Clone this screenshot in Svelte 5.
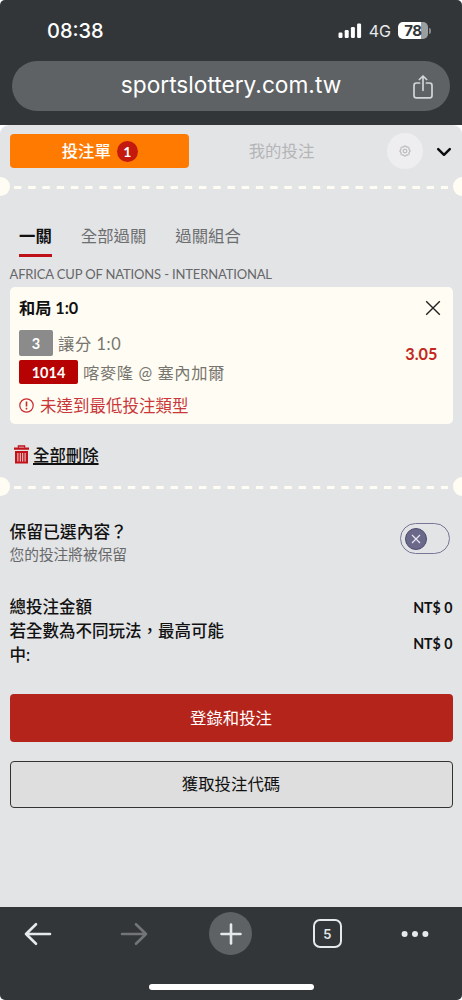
<script>
  let keepSelection = $state(false);
  let activeMode = $state('一關');

  const modes = ['一關', '全部過關', '過關組合'];

  const bet = {
    league: 'AFRICA CUP OF NATIONS - INTERNATIONAL',
    pick: '和局 1:0',
    marketNo: '3',
    market: '讓分 1:0',
    eventNo: '1014',
    event: '喀麥隆 @ 塞內加爾',
    odds: '3.05',
    warning: '未達到最低投注類型'
  };

  const totals = [
    { label: '總投注金額', value: 'NT$ 0' },
    { label: '若全數為不同玩法，最高可能中:', value: 'NT$ 0' }
  ];
</script>

{#snippet perforation()}
  <div class="perforation">
    <span class="notch"></span>
    <svg class="dashes" width="434" height="4" viewBox="0 0 434 4">
      <path d="M0 2.5H434" stroke="#fffdf3" stroke-width="3" stroke-dasharray="7.4 6.83" />
    </svg>
    <span class="notch"></span>
  </div>
{/snippet}

<div class="phone">
  <header class="browser-top">
    <div class="status-bar">
      <span class="clock">08:38</span>
      <div class="status-right">
        <svg width="24" height="16" viewBox="0 0 24 16" fill="#fff">
          <rect x="0.5" y="9.5" width="4" height="5.5" rx="1.2" />
          <rect x="6.7" y="7" width="4" height="8" rx="1.2" />
          <rect x="12.9" y="4" width="4" height="11" rx="1.2" />
          <rect x="19.1" y="0.5" width="4" height="14.5" rx="1.2" />
        </svg>
        <span class="network">4G</span>
        <div class="battery"><span>78</span></div>
        <i class="battery-cap"></i>
      </div>
    </div>
    <div class="url-bar">
      <span class="url">sportslottery.com.tw</span>
      <svg class="share" width="20" height="24" viewBox="0 0 20 24" fill="none" stroke="#d3d6d8" stroke-width="1.7" stroke-linecap="round" stroke-linejoin="round">
        <path d="M6.6 8H3.4Q1 8 1 10.4V20.4Q1 22.8 3.4 22.8H16.6Q19 22.8 19 20.4V10.4Q19 8 16.6 8H13.4M10 15.3V1.2M6.4 4.5L10 1L13.6 4.5" />
      </svg>
    </div>
  </header>

  <main class="slip">
    <div class="slip-tabs">
      <button class="tab-slip"><span class="tab-text">投注單</span><span class="count">1</span></button>
      <button class="tab-mine">我的投注</button>
      <button class="settings" aria-label="設定">
        <svg width="12" height="12" viewBox="0 0 12 12" fill="none" stroke="#a2a2a4" stroke-width="0.8" stroke-linejoin="round">
          <path d="M4.9 1.9L5.1 1H6.9L7.1 1.9L8.2 2.3L9.1 1.7L10.3 2.9L9.7 3.8L10.1 4.9L11 5.1V6.9L10.1 7.1L9.7 8.2L10.3 9.1L9.1 10.3L8.2 9.7L7.1 10.1L6.9 11H5.1L4.9 10.1L3.8 9.7L2.9 10.3L1.7 9.1L2.3 8.2L1.9 7.1L1 6.9V5.1L1.9 4.9L2.3 3.8L1.7 2.9L2.9 1.7L3.8 2.3Z" />
          <circle cx="6" cy="6" r="1.9" />
        </svg>
      </button>
      <svg class="chevron" width="16" height="10" viewBox="0 0 16 10" fill="none" stroke="#0c0c10" stroke-width="2.5" stroke-linecap="round" stroke-linejoin="round">
        <path d="M2.2 2.2L8 7.8L13.8 2.2" />
      </svg>
    </div>

    {@render perforation()}

    <nav class="modes">
      {#each modes as mode}
        <button class:active={mode === activeMode} onclick={() => (activeMode = mode)}>{mode}</button>
      {/each}
    </nav>

    <div class="league">{bet.league}</div>

    <section class="card">
      <div class="card-head">
        <strong>{bet.pick}</strong>
        <svg width="16" height="16" viewBox="0 0 16 16" stroke="#222" stroke-width="1.4">
          <path d="M1.2 1.2L14.8 14.8M14.8 1.2L1.2 14.8" />
        </svg>
      </div>
      <div class="card-body">
        <div>
          <div class="line market"><b class="tag grey">{bet.marketNo}</b>{bet.market}</div>
          <div class="line event"><b class="tag red">{bet.eventNo}</b>{bet.event}</div>
        </div>
        <b class="odds">{bet.odds}</b>
      </div>
      <div class="warning">
        <svg width="15" height="15" viewBox="0 0 15 15" fill="none" stroke="#c9282d">
          <circle cx="7.5" cy="7.5" r="6.7" stroke-width="1.2" />
          <path d="M7.5 3.4V8.4M7.5 9.8V11.4" stroke-width="1.6" />
        </svg>
        {bet.warning}
      </div>
    </section>

    <button class="clear-all">
      <svg width="15" height="19" viewBox="0 0 15 19">
        <path d="M4.4 2.8V1H10.6V2.8" fill="none" stroke="#c1121a" stroke-width="1.3" />
        <path d="M0 2.6H15V4.8H0ZM1 6H14V18.6H1Z" fill="#c1121a" />
        <path d="M3.9 8V16.6M6.3 8V16.6M8.7 8V16.6M11.1 8V16.6" stroke="#f0d5d6" stroke-width="1" />
      </svg>
      <span>全部刪除</span>
    </button>

    {@render perforation()}

    <section class="keep">
      <div>
        <div class="keep-title">保留已選內容？</div>
        <div class="keep-note">您的投注將被保留</div>
      </div>
      <button class="toggle" class:on={keepSelection} aria-label="保留已選內容" onclick={() => (keepSelection = !keepSelection)}>
        <span class="knob">
          <svg width="10" height="10" viewBox="0 0 10 10" stroke="#eceaf4" stroke-width="1.1">
            <path d="M1 1L9 9M9 1L1 9" />
          </svg>
        </span>
      </button>
    </section>

    <section class="totals">
      {#each totals as row}
        <div class="total">
          <span class="total-label">{row.label}</span>
          <span class="total-value">{row.value}</span>
        </div>
      {/each}
    </section>

    <div class="actions">
      <button class="primary">登錄和投注</button>
      <button class="secondary">獲取投注代碼</button>
    </div>
  </main>

  <footer class="toolbar">
    <div class="tools">
      <svg width="28" height="24" viewBox="0 0 28 24" fill="none" stroke="#e6e9ec" stroke-width="2.6" stroke-linecap="round" stroke-linejoin="round">
        <path d="M26 12H2M12 2.2L2 12L12 21.8" />
      </svg>
      <svg width="28" height="24" viewBox="0 0 28 24" fill="none" stroke="#727475" stroke-width="2.6" stroke-linecap="round" stroke-linejoin="round">
        <path d="M2 12H26M16 2.2L26 12L16 21.8" />
      </svg>
      <span class="plus">
        <svg width="24" height="24" viewBox="0 0 24 24" stroke="#e6e9ec" stroke-width="2.6" stroke-linecap="round">
          <path d="M12 2.5V21.5M2.5 12H21.5" />
        </svg>
      </span>
      <span class="tab-count">5</span>
      <svg width="28" height="8" viewBox="0 0 28 8" fill="#e6e9ec">
        <circle cx="3.6" cy="4" r="3" />
        <circle cx="14" cy="4" r="3" />
        <circle cx="24.4" cy="4" r="3" />
      </svg>
    </div>
    <div class="home-indicator"></div>
  </footer>
</div>

<style>
  :global(body) {
    margin: 0;
    background: #fff;
  }
  .phone {
    width: 462px;
    height: 1000px;
    display: flex;
    flex-direction: column;
    overflow: hidden;
    border-radius: 5px;
    background: #fff;
    font-family: Lato, 'Noto Sans CJK TC', sans-serif;
    color: #111;
  }
  button {
    font: inherit;
    color: inherit;
    border: none;
    background: none;
    padding: 0;
    cursor: pointer;
  }
  svg {
    display: block;
    flex-shrink: 0;
  }

  .browser-top {
    height: 125px;
    box-sizing: border-box;
    padding: 0 12px;
    background: #323639;
    font-family: Inter, 'Liberation Sans', sans-serif;
    color: #fff;
  }
  .status-bar {
    display: flex;
    align-items: center;
    justify-content: space-between;
    height: 61px;
    padding: 0 19px 0 35px;
  }
  .clock {
    font-size: 20px;
    font-weight: 500;
  }
  .status-right {
    display: flex;
    align-items: center;
  }
  .network {
    margin: 0 7px 0 7px;
    font-size: 16px;
    color: #e9eaeb;
  }
  .battery {
    width: 30px;
    height: 17px;
    line-height: 17px;
    border-radius: 5px;
    background: linear-gradient(90deg, #fff 78%, #9b9d9f 78%);
    color: #323639;
    font-size: 15px;
    font-weight: 700;
    text-align: center;
  }
  .battery span {
    letter-spacing: -0.4px;
  }
  .battery-cap {
    width: 2px;
    height: 6px;
    margin-left: 1px;
    border-radius: 0 3px 3px 0;
    background: #85888a;
  }
  .url-bar {
    display: flex;
    align-items: center;
    height: 50px;
    padding: 0 17px 0 37px;
    border-radius: 25px;
    background: #5e6265;
  }
  .url {
    flex: 1;
    margin-top: -3px;
    text-align: center;
    font-size: 22.7px;
  }
  .share {
    margin-top: 2px;
  }

  .slip {
    flex: 1;
    border-radius: 9px 9px 0 0;
    background: #e3e4e6;
    overflow: hidden;
  }
  .slip-tabs {
    display: flex;
    align-items: center;
    height: 52px;
    padding: 0 10px 0 9.5px;
  }
  .tab-slip {
    display: flex;
    align-items: center;
    justify-content: center;
    gap: 6px;
    width: 179.5px;
    height: 34px;
    padding-left: 1px;
    box-sizing: border-box;
    border-radius: 4px;
    background: #ff7a00;
    color: #fff;
    font-size: 16.4px;
    font-weight: 500;
  }
  .tab-text {
    margin-top: -3px;
  }
  .count {
    width: 21px;
    height: 21px;
    line-height: 21px;
    border-radius: 50%;
    background: #c3190f;
    font-size: 14px;
    font-weight: 700;
  }
  .tab-mine {
    flex: 1;
    padding: 0 13px 2px 0;
    color: #b4b5b7;
    font-size: 16.4px;
  }
  .settings {
    display: flex;
    align-items: center;
    justify-content: center;
    width: 36px;
    height: 36px;
    margin-right: 13px;
    border-radius: 50%;
    background: #eeeef1;
  }
  .chevron {
    margin-top: 1px;
  }

  .perforation {
    display: flex;
    align-items: center;
    justify-content: space-between;
    height: 19px;
    margin: 0 -9.5px;
  }
  .notch {
    width: 19px;
    height: 19px;
    border-radius: 50%;
    background: #fffdf3;
  }

  .modes {
    display: flex;
    gap: 29px;
    height: 60.5px;
    padding: 0 19px;
    align-items: flex-end;
    color: #6d6e70;
  }
  .modes button {
    height: 35px;
    line-height: 28px;
    padding-bottom: 3px;
    font-size: 16.4px;
    border-bottom: 3.5px solid transparent;
    box-sizing: border-box;
  }
  .modes .active {
    color: #111;
    font-weight: 700;
    border-color: #bf1118;
  }
  .league {
    height: 30.5px;
    line-height: 35px;
    padding-left: 9.5px;
    color: #666769;
    font-size: 13px;
    letter-spacing: -0.15px;
  }

  .card {
    height: 137px;
    box-sizing: border-box;
    margin: 0 9.5px;
    padding: 7px 10px 0 9.5px;
    border-radius: 5px;
    background: #fffdf3;
  }
  .card-head {
    display: flex;
    align-items: center;
    justify-content: space-between;
    height: 25px;
    padding-right: 2px;
    font-size: 16.2px;
  }
  .card-head svg {
    margin-top: 3px;
  }
  .card-body {
    display: flex;
    align-items: center;
    justify-content: space-between;
    padding: 11px 5px 0 0;
  }
  .line {
    display: flex;
    align-items: center;
    gap: 5px;
    color: #77756f;
    font-size: 16.3px;
    letter-spacing: 0.6px;
  }
  .market {
    height: 26px;
  }
  .event {
    height: 24px;
    margin-top: 4px;
  }
  .tag {
    border-radius: 2px;
    color: #fff;
    font-size: 14.5px;
    text-align: center;
    letter-spacing: 0;
  }
  .grey {
    width: 34px;
    height: 26px;
    line-height: 27px;
    background: #8b8b8b;
  }
  .red {
    width: 59px;
    height: 24px;
    line-height: 25px;
    background: #b60202;
  }
  .odds {
    margin-top: -8px;
    color: #c3281f;
    font-size: 16.3px;
  }
  .warning {
    display: flex;
    align-items: center;
    gap: 6px;
    height: 24px;
    margin-top: 9px;
    color: #c9373a;
    font-size: 16.5px;
  }

  .clear-all {
    display: flex;
    align-items: center;
    gap: 4px;
    height: 53px;
    padding: 8px 0 0 14px;
    box-sizing: border-box;
    font-size: 16.4px;
    font-weight: 500;
  }
  .clear-all span {
    margin-top: -2px;
    text-decoration: underline;
    text-decoration-thickness: 1.5px;
    text-underline-offset: 2px;
  }

  .keep {
    display: flex;
    justify-content: space-between;
    height: 99px;
    padding: 25px 12px 0 9.5px;
    box-sizing: border-box;
  }
  .keep-title {
    height: 22px;
    line-height: 22px;
    font-size: 16.8px;
    font-weight: 500;
  }
  .keep-note {
    line-height: 22px;
    font-size: 14.7px;
    color: #68696b;
  }
  .toggle {
    display: flex;
    align-items: center;
    width: 50px;
    height: 31px;
    margin-top: 2px;
    padding: 0 4px;
    box-sizing: border-box;
    border: 1.5px solid #787696;
    border-radius: 16px;
  }
  .toggle.on {
    justify-content: flex-end;
  }
  .knob {
    display: flex;
    align-items: center;
    justify-content: center;
    width: 22px;
    height: 22px;
    box-sizing: border-box;
    border: 1px solid #4e4b70;
    border-radius: 50%;
    background: #6b6989;
  }

  .totals {
    height: 99px;
    padding: 0 9.5px;
    font-size: 16.5px;
    line-height: 24px;
    font-weight: 500;
  }
  .total {
    display: flex;
    align-items: center;
    justify-content: space-between;
  }
  .total-label {
    width: 225px;
  }
  .total-value {
    padding-top: 2px;
    font-size: 14.2px;
    font-weight: 700;
    line-height: 22px;
  }

  .actions {
    display: flex;
    flex-direction: column;
    gap: 19px;
    padding: 0 9.5px;
  }
  .actions button {
    height: 47.5px;
    padding-bottom: 2px;
    border-radius: 4px;
    font-size: 16.4px;
  }
  .primary {
    background: #b4241b;
    color: #fff;
  }
  .secondary {
    border: 1.5px solid #333;
    background: #dedede;
  }

  .toolbar {
    height: 93px;
    background: #323639;
  }
  .tools {
    display: grid;
    grid-template-columns: repeat(4, 96.5px) 79.5px;
    align-items: center;
    justify-items: center;
    height: 53px;
    margin-left: -10.3px;
  }
  .plus {
    display: flex;
    align-items: center;
    justify-content: center;
    width: 43px;
    height: 43px;
    border-radius: 50%;
    background: #5e6265;
  }
  .tab-count {
    width: 29px;
    height: 29px;
    box-sizing: border-box;
    border: 2px solid #e6e9ec;
    border-radius: 7px;
    color: #e6e9ec;
    font: 600 13px/26px Inter, sans-serif;
    text-align: center;
  }
  .home-indicator {
    width: 165px;
    height: 6px;
    margin: 24px auto 0;
    border-radius: 3px;
    background: #fff;
  }
</style>
